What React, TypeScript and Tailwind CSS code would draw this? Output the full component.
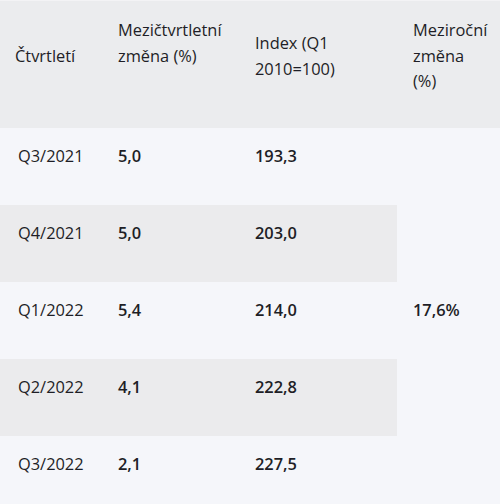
import React from 'react';

const rows = [
  { q: 'Q3/2021', qoq: '5,0', index: '193,3' },
  { q: 'Q4/2021', qoq: '5,0', index: '203,0' },
  { q: 'Q1/2022', qoq: '5,4', index: '214,0' },
  { q: 'Q2/2022', qoq: '4,1', index: '222,8' },
  { q: 'Q3/2022', qoq: '2,1', index: '227,5' },
];

const App: React.FC = () => {
  return (
    <div
      className="w-[500px] h-[504px] overflow-hidden bg-[#f5f6fa] text-[#1e1e26] text-[16.4px] leading-[25.6px]"
      style={{ fontFamily: '"Open Sans", "Noto Sans", sans-serif' }}
    >
      <div className="h-px bg-[#f3f3f5]" />
      <table className="w-[500px] table-fixed border-collapse">
        <colgroup>
          <col className="w-[104px]" />
          <col className="w-[137px]" />
          <col className="w-[156px]" />
          <col className="w-[103px]" />
        </colgroup>
        <thead>
          <tr className="h-[127px] bg-[#ebecee] align-top">
            <th className="pl-[15px] pr-2 pt-[42px] text-left font-normal">Čtvrtletí</th>
            <th className="pl-[14px] pr-1 pt-[16px] text-left font-normal">
              Mezičtvrtletní změna (%)
            </th>
            <th className="pl-[14px] pr-2 pt-[29px] text-left font-normal">
              Index (Q1 2010=100)
            </th>
            <th className="pl-[16px] pr-4 pt-[16px] text-left font-normal">
              Meziroční změna (%)
            </th>
          </tr>
        </thead>
        <tbody>
          {rows.map((r, i) => (
            <tr
              key={r.q}
              className={`h-[77px] align-top ${i % 2 === 1 ? 'bg-[#ebebed]' : 'bg-[#f5f6fa]'}`}
            >
              <td className="pl-[18px] pt-[15px]">{r.q}</td>
              <td className="pl-[14px] pt-[15px] font-semibold">{r.qoq}</td>
              <td className="pl-[14px] pt-[15px] font-semibold">{r.index}</td>
              {i === 0 && (
                <td rowSpan={5} className="bg-[#f5f6fa] pl-[16px] align-middle font-semibold">
                  <div className="pb-[22px]">17,6%</div>
                </td>
              )}
            </tr>
          ))}
        </tbody>
      </table>
    </div>
  );
};

export default App;
